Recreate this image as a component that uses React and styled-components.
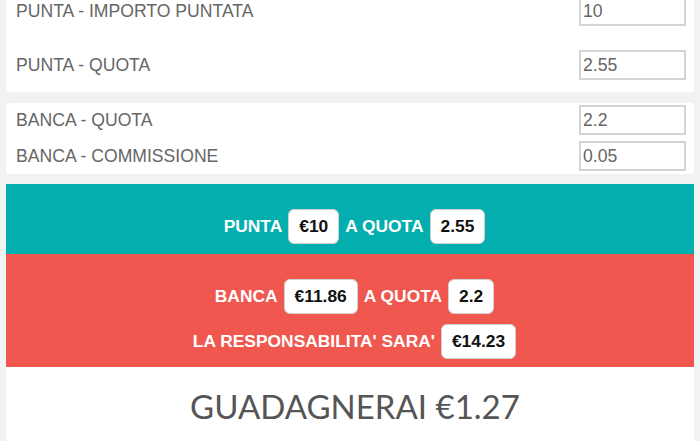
import React from "react";
import styled, { createGlobalStyle } from "styled-components";

const GlobalStyle = createGlobalStyle`
  html, body { margin: 0; padding: 0; }
  body {
    background: #f1f2f2;
    font-family: "Liberation Sans", Arial, sans-serif;
    overflow: hidden;
  }
`;

const Page = styled.div`
  display: flex;
  flex-direction: column;
  padding: 0 6px;
  margin-top: -8px;
`;

const Panel = styled.div`
  background: #fff;
  border-radius: 3px;
  display: flex;
  flex-direction: column;
  gap: ${(p) => p.$gap}px;
  padding: ${(p) => p.$pad};
  margin-bottom: ${(p) => p.$mb}px;
`;

const Row = styled.div`
  display: flex;
  align-items: center;
  justify-content: space-between;
  height: 30px;
`;

const Label = styled.span`
  font-size: 17.6px;
  color: #666;
  padding-top: 1px;
`;

const Input = styled.input`
  box-sizing: border-box;
  width: 107px;
  height: 30px;
  border: 2px solid #d4d4d4;
  border-radius: 0;
  padding: 0 2px;
  font-family: "Liberation Sans", Arial, sans-serif;
  font-size: 17.6px;
  color: #666;
  background: #fff;
  outline: none;
`;

const Strip = styled.div`
  background: ${(p) => p.$bg};
  display: flex;
  flex-direction: column;
  align-items: center;
  gap: 10px;
  padding: 25px 0 ${(p) => p.$pb}px 9px;
`;

const Line = styled.div`
  display: flex;
  align-items: center;
  gap: 6px;
  height: 35px;
  color: #fff;
  font-weight: bold;
  font-size: 17.4px;
`;

const Badge = styled.span`
  box-sizing: border-box;
  display: inline-flex;
  align-items: center;
  height: 35px;
  padding: 0 10px;
  background: #fff;
  border: 1px solid #d0d0d0;
  border-radius: 6px;
  color: #111;
  font-weight: bold;
  font-size: 17.4px;
`;

const Result = styled.div`
  background: #fff;
  height: 90px;
  display: flex;
  justify-content: center;
  padding: 19px 0 0 10px;
  box-sizing: border-box;
`;

const ResultText = styled.div`
  font-family: Lato, "Open Sans", sans-serif;
  font-weight: 400;
  font-size: 33px;
  color: #555;
  line-height: 40px;
`;

export default function App() {
  return (
    <>
      <GlobalStyle />
      <Page>
        <Panel $gap={24} $pad="4px 8px 12px 10px" $mb={11}>
          <Row>
            <Label>PUNTA - IMPORTO PUNTATA</Label>
            <Input defaultValue="10" />
          </Row>
          <Row>
            <Label>PUNTA - QUOTA</Label>
            <Input defaultValue="2.55" />
          </Row>
        </Panel>
        <Panel $gap={6} $pad="2px 8px 3px 10px" $mb={10}>
          <Row>
            <Label>BANCA - QUOTA</Label>
            <Input defaultValue="2.2" />
          </Row>
          <Row>
            <Label>BANCA - COMMISSIONE</Label>
            <Input defaultValue="0.05" />
          </Row>
        </Panel>
        <Strip $bg="#02aeae" $pb={10}>
          <Line>
            PUNTA <Badge>€10</Badge> A QUOTA <Badge>2.55</Badge>
          </Line>
        </Strip>
        <Strip $bg="#f0574f" $pb={8}>
          <Line>
            BANCA <Badge>€11.86</Badge> A QUOTA <Badge>2.2</Badge>
          </Line>
          <Line>
            LA RESPONSABILITA' SARA' <Badge>€14.23</Badge>
          </Line>
        </Strip>
        <Result>
          <ResultText>GUADAGNERAI €1.27</ResultText>
        </Result>
      </Page>
    </>
  );
}
